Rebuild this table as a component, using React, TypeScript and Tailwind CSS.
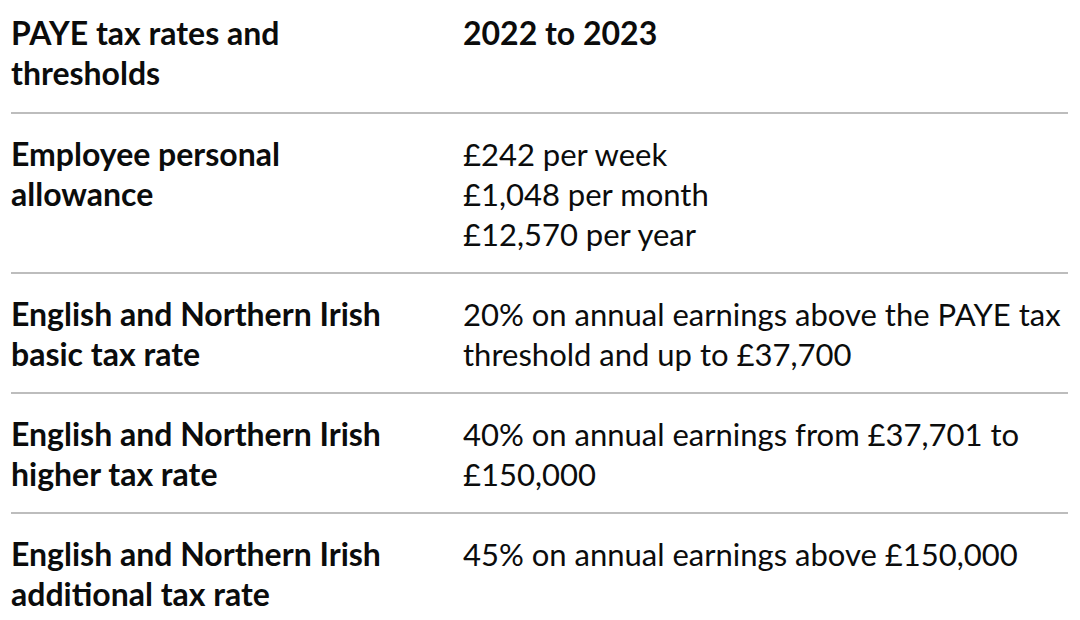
import React from 'react';

const rows: { label: string; value: string[] }[] = [
  { label: 'Employee personal allowance', value: ['£242 per week', '£1,048 per month', '£12,570 per year'] },
  {
    label: 'English and Northern Irish basic tax rate',
    value: ['20% on annual earnings above the PAYE tax threshold and up to £37,700'],
  },
  {
    label: 'English and Northern Irish higher tax rate',
    value: ['40% on annual earnings from £37,701 to £150,000'],
  },
  {
    label: 'English and Northern Irish additional tax rate',
    value: ['45% on annual earnings above £150,000'],
  },
];

export default function App() {
  return (
    <div className="w-[1080px] h-[620px] overflow-hidden bg-white font-['Lato',sans-serif] text-[#0b0c0c] text-[31px] leading-[40px]">
      <div className="ml-[11px] w-[1057px] -mt-[7px]">
        {/* header row */}
        <div className="grid grid-cols-[452px_1fr] border-b-2 border-[#bdbdbd] pt-[20px] pb-[19px]">
          <div className="font-bold text-[32px] pr-[50px]">PAYE tax rates and thresholds</div>
          <div className="font-bold text-[32px]">2022 to 2023</div>
        </div>
        {rows.map((row, i) => (
          <div
            key={i}
            className="grid grid-cols-[452px_1fr] border-b-2 border-[#bdbdbd] pt-[20px] pb-[18px]"
          >
            <div className="font-bold text-[32px] pr-[50px]">{row.label}</div>
            <div>
              {row.value.map((v) => (
                <div key={v}>{v}</div>
              ))}
            </div>
          </div>
        ))}
      </div>
    </div>
  );
}
